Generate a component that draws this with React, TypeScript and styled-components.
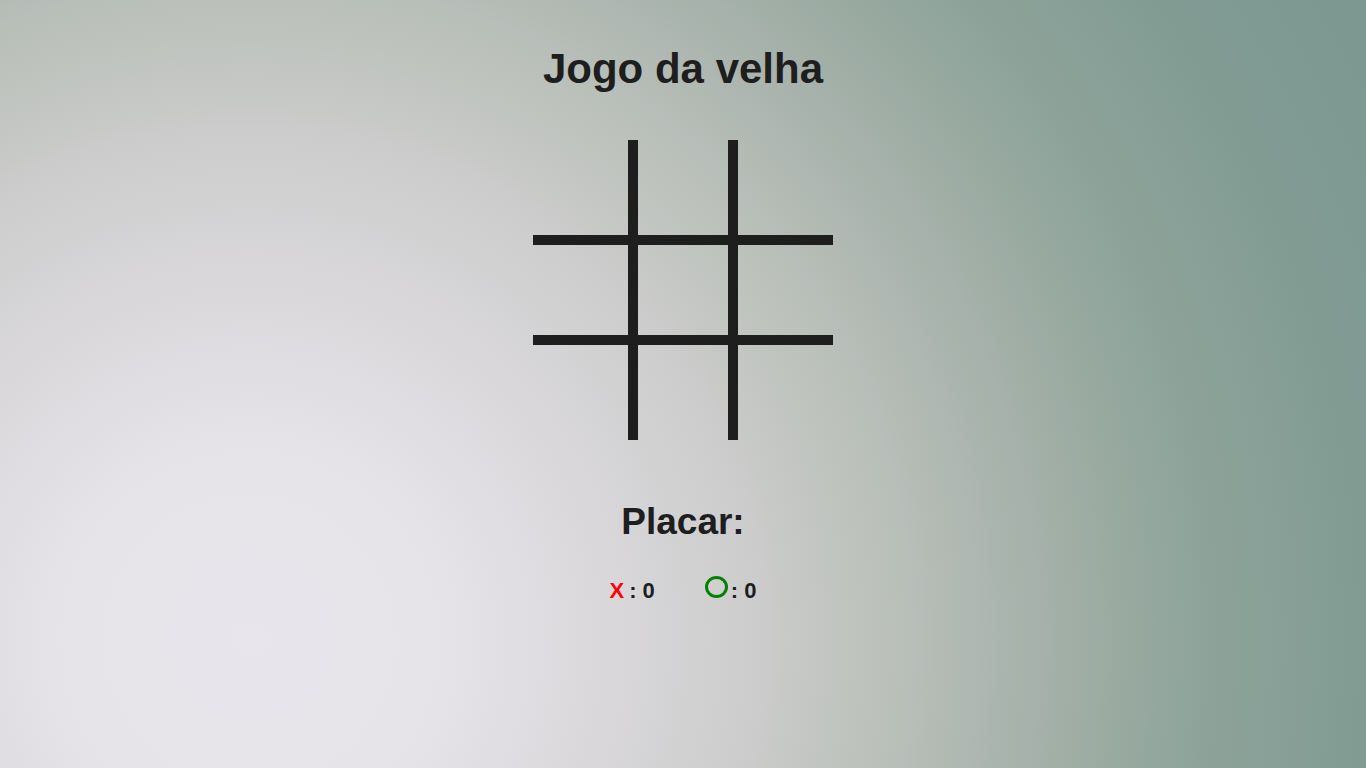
import React from "react";
import styled, { createGlobalStyle } from "styled-components";

const GlobalStyle = createGlobalStyle`
  html, body {
    margin: 0;
    padding: 0;
  }
  body {
    font-family: "Liberation Sans", Arial, sans-serif;
    color: #1e1e1e;
  }
`;

const Page = styled.main`
  min-height: 100vh;
  box-sizing: border-box;
  padding-top: 45px;
  display: flex;
  flex-direction: column;
  align-items: center;
  background: radial-gradient(
    circle at 250px 640px,
    #e8e6ec 0px,
    #e6e3e8 200px,
    #dad8db 350px,
    #cdcdcd 500px,
    #c3c6c2 570px,
    #bbc0bb 640px,
    #abb5af 750px,
    #98a9a0 880px,
    #8da39a 960px,
    #829c94 1100px,
    #7c9890 1250px
  );
`;

const Title = styled.h1`
  margin: 0;
  font-size: 42px;
  line-height: 48px;
  font-weight: 700;
`;

const Board = styled.div`
  margin-top: 47px;
  display: grid;
  grid-template-columns: repeat(3, 100px);
  grid-template-rows: repeat(3, 100px);
`;

const Cell = styled.div<{ $row: number; $col: number }>`
  box-sizing: border-box;
  width: 100px;
  height: 100px;
  border-style: solid;
  border-color: #1e1e1e;
  border-top-width: ${(p) => (p.$row > 0 ? "5px" : "0")};
  border-bottom-width: ${(p) => (p.$row < 2 ? "5px" : "0")};
  border-left-width: ${(p) => (p.$col > 0 ? "5px" : "0")};
  border-right-width: ${(p) => (p.$col < 2 ? "5px" : "0")};
`;

const ScoreTitle = styled.h2`
  margin: 61px 0 0;
  font-size: 37px;
  line-height: 42px;
  font-weight: 700;
`;

const Scores = styled.div`
  margin-top: 33px;
  display: flex;
  align-items: baseline;
  gap: 50px;
  font-size: 22px;
  line-height: 28px;
  font-weight: 700;
`;

const ScoreItem = styled.div`
  display: flex;
  align-items: baseline;
  white-space: pre;
`;

const XMark = styled.span`
  color: #ff0000;
  margin-right: 5px;
`;

const OMark = styled.span`
  display: inline-block;
  box-sizing: border-box;
  width: 23px;
  height: 22px;
  border: 3px solid #008000;
  border-radius: 50%;
  margin-right: 3px;
`;

export default function App() {
  const cells = [];
  for (let r = 0; r < 3; r++) {
    for (let c = 0; c < 3; c++) {
      cells.push(<Cell key={`${r}-${c}`} $row={r} $col={c} />);
    }
  }
  return (
    <>
      <GlobalStyle />
      <Page>
        <Title>Jogo da velha</Title>
        <Board>{cells}</Board>
        <ScoreTitle>Placar:</ScoreTitle>
        <Scores>
          <ScoreItem>
            <XMark>X</XMark>
            <span>: 0</span>
          </ScoreItem>
          <ScoreItem>
            <OMark />
            <span>: 0</span>
          </ScoreItem>
        </Scores>
      </Page>
    </>
  );
}
